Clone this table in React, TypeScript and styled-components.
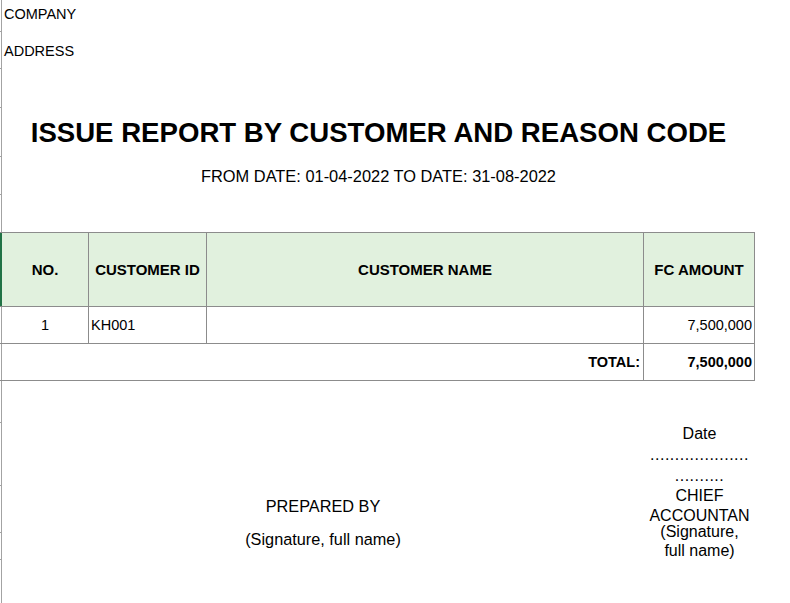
import React from "react";
import styled, { createGlobalStyle } from "styled-components";

const GlobalStyle = createGlobalStyle`
  html, body {
    margin: 0;
    padding: 0;
    background: #ffffff;
  }
  body {
    font-family: "Liberation Sans", Arial, sans-serif;
    color: #000000;
  }
  * { box-sizing: border-box; }
`;

const GRID = "2px 87px 118px 437px 111px";
const LINE = "#8c8c8c";
const GUTTER = "#a3a3a3";
const GREEN = "#217346";

const Sheet = styled.div`
  display: flex;
  flex-direction: column;
  min-height: 100vh;
  overflow: hidden;
`;

const Row = styled.div<{ $h?: number; $grow?: boolean }>`
  display: grid;
  grid-template-columns: ${GRID};
  width: 755px;
  height: ${(p) => (p.$h ? `${p.$h}px` : "auto")};
  flex: ${(p) => (p.$grow ? "1" : "none")};
`;

const TableRow = styled(Row)<{ $top?: boolean; $head?: boolean }>`
  border-bottom: 1px solid ${LINE};
  border-top: ${(p) => (p.$top ? `1px solid ${LINE}` : "none")};
  background: ${(p) => (p.$head ? "#e1f1de" : "transparent")};
`;

const Gutter = styled.div<{ $tick?: boolean; $accent?: boolean }>`
  grid-column: 1;
  width: 2px;
  background: ${(p) =>
    p.$accent ? GREEN : `linear-gradient(to right, transparent 1px, ${GUTTER} 1px)`};
  border-bottom: ${(p) => (p.$tick ? `1px solid ${GUTTER}` : "none")};
`;

const Cell = styled.div<{
  $span?: number;
  $align?: "left" | "center" | "right";
  $size?: number;
  $bold?: boolean;
  $border?: boolean;
  $lh?: number;
  $lift?: number;
}>`
  grid-column: span ${(p) => p.$span ?? 1};
  display: flex;
  flex-direction: column;
  justify-content: center;
  align-items: ${(p) =>
    p.$align === "left" ? "flex-start" : p.$align === "right" ? "flex-end" : "center"};
  text-align: ${(p) => p.$align ?? "center"};
  padding: 0 2px ${(p) => p.$lift ?? 0}px 2px;
  font-size: ${(p) => p.$size ?? 14.5}px;
  font-weight: ${(p) => (p.$bold ? 700 : 400)};
  line-height: ${(p) => (p.$lh ? `${p.$lh}px` : "normal")};
  border-right: ${(p) => (p.$border ? `1px solid ${LINE}` : "none")};
  white-space: nowrap;
  overflow: visible;
`;

const Title = styled(Cell)`
  font-size: 27.6px;
  font-weight: 700;
`;

const Dots = styled.span`
  letter-spacing: 0.5px;
`;

const dots = (n: number) => ".".repeat(n);

export default function App() {
  return (
    <>
      <GlobalStyle />
      <Sheet>
        <Row $h={32}>
          <Gutter $tick />
          <Cell $span={2} $align="left" $size={14.5} $lift={4}>
            COMPANY
          </Cell>
        </Row>
        <Row $h={37}>
          <Gutter $tick />
          <Cell $span={2} $align="left" $size={14.5}>
            ADDRESS
          </Cell>
        </Row>
        <Row $h={39}>
          <Gutter $tick />
        </Row>
        <Row $h={49}>
          <Gutter $tick />
          <Title $span={4}>ISSUE REPORT BY CUSTOMER AND REASON CODE</Title>
        </Row>
        <Row $h={38}>
          <Gutter $tick />
          <Cell $span={4} $size={16.4}>
            FROM DATE: 01-04-2022 TO DATE: 31-08-2022
          </Cell>
        </Row>
        <Row $h={37}>
          <Gutter />
        </Row>

        <TableRow $h={75} $top $head>
          <Gutter $accent />
          <Cell $bold $size={15} $border>NO.</Cell>
          <Cell $bold $size={15} $border>CUSTOMER ID</Cell>
          <Cell $bold $size={15} $border>CUSTOMER NAME</Cell>
          <Cell $bold $size={15} $border>FC AMOUNT</Cell>
        </TableRow>
        <TableRow $h={37}>
          <Gutter />
          <Cell $border>1</Cell>
          <Cell $border $align="left">KH001</Cell>
          <Cell $border />
          <Cell $border $align="right">7,500,000</Cell>
        </TableRow>
        <TableRow $h={37}>
          <Gutter />
          <Cell $span={3} $border $align="right" $bold style={{ paddingRight: 3 }}>
            TOTAL:
          </Cell>
          <Cell $border $align="right" $bold>
            7,500,000
          </Cell>
        </TableRow>

        <Row $h={42}>
          <Gutter $tick />
        </Row>
        <Row $h={63}>
          <Gutter $tick />
          <Cell $span={3} />
          <Cell $size={16} $lh={21}>
            <span>Date</span>
            <Dots>{dots(20)}</Dots>
            <Dots>{dots(10)}</Dots>
          </Cell>
        </Row>
        <Row $h={36}>
          <Gutter $tick />
          <Cell $span={3} $size={16.3} $lift={6}>
            PREPARED BY
          </Cell>
          <Cell $size={16} $lh={20} $lift={7}>
            <span>CHIEF</span>
            <span>ACCOUNTAN</span>
          </Cell>
        </Row>
        <Row $h={37}>
          <Gutter $tick />
          <Cell $span={3} $size={16.3} $lift={4}>
            (Signature, full name)
          </Cell>
          <Cell $size={16} $lh={19} $lift={0}>
            <span>(Signature,</span>
            <span>full name)</span>
          </Cell>
        </Row>
        <Row $grow>
          <Gutter />
        </Row>
      </Sheet>
    </>
  );
}
